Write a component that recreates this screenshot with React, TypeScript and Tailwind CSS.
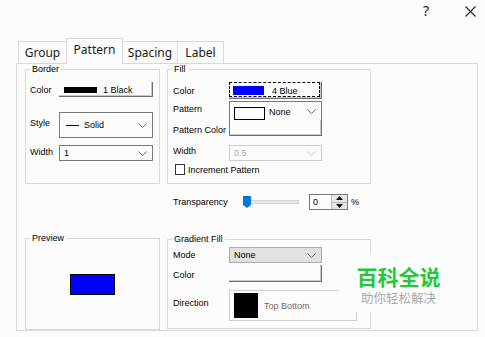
import React from 'react';

const Chevron = ({ color = '#6b6b6b' }: { color?: string }) => (
  <svg width="9" height="5" viewBox="0 0 9 5">
    <path d="M0.5 0.5 L4.5 4.5 L8.5 0.5" fill="none" stroke={color} strokeWidth="1" />
  </svg>
);

const GroupBox = ({
  label,
  className,
  children,
}: {
  label: string;
  className?: string;
  children?: React.ReactNode;
}) => (
  <div className={`relative border border-[#d9d9d9] ${className ?? ''}`}>
    <span className="absolute -top-[6px] left-[4px] px-[2px] bg-[#fcfcfc] text-[9px] leading-[10px] text-black">
      {label}
    </span>
    {children}
  </div>
);

// flat button with dark bottom/right edge
const FlatButton = ({ className, children }: { className?: string; children?: React.ReactNode }) => (
  <div
    className={`flex items-center shadow-[inset_-1px_-1px_0_#6e6e6e,inset_-2px_-2px_0_#c9c9c9] ${className ?? ''}`}
  >
    {children}
  </div>
);

const Select = ({
  className,
  children,
  disabled,
}: {
  className?: string;
  children?: React.ReactNode;
  disabled?: boolean;
}) => (
  <div
    className={`flex items-center justify-between border pr-[5px] ${
      disabled ? 'border-[#cccccc] text-[#a6a6a6]' : 'border-[#7a7a7a]'
    } ${className ?? ''}`}
  >
    <div className="flex items-center">{children}</div>
    <Chevron color={disabled ? '#bdbdbd' : '#6b6b6b'} />
  </div>
);

export default function App() {
  return (
    <div className="relative w-[485px] h-[337px] overflow-hidden bg-[#fcfcfc] font-['Liberation_Sans',Arial,sans-serif] text-black">
      {/* title bar */}
      <div className="flex h-[39px] items-start justify-end pr-[9px] pt-[2px]">
        <span className="font-['Noto_Sans',sans-serif] text-[14px] leading-[18px] text-[#222]">?</span>
        <svg className="ml-[36px] mt-[4px]" width="11" height="11" viewBox="0 0 11 11">
          <path d="M0.5 0.5 L10.5 10.5 M10.5 0.5 L0.5 10.5" stroke="#222" strokeWidth="1.1" />
        </svg>
      </div>

      {/* tabs */}
      <div className="flex h-[24px] items-end pl-[18px] font-['Noto_Sans',sans-serif] text-[12px] text-[#1a1a1a]">
        <div className="flex h-[22px] w-[49px] items-center justify-center border border-b-0 border-[#d9d9d9] pt-[1px]">
          Group
        </div>
        <div className="relative z-10 -ml-px -mb-px flex h-[26px] w-[57px] items-start justify-center border border-b-0 border-[#d9d9d9] bg-[#fcfcfc] pt-[2px]">
          Pattern
        </div>
        <div className="-ml-px flex h-[22px] w-[56px] items-center justify-center border border-b-0 border-[#d9d9d9] pt-[1px]">
          Spacing
        </div>
        <div className="-ml-px flex h-[22px] w-[47px] items-center justify-center border border-b-0 border-[#d9d9d9] pt-[1px]">
          Label
        </div>
      </div>

      {/* tab panel */}
      <div className="ml-[16px] flex h-[268px] w-[462px] gap-[7px] border border-[#d9d9d9] pl-[8px] pt-[5px] text-[9px] leading-[10px]">
        {/* left column */}
        <div className="flex w-[135px] flex-col">
          <GroupBox label="Border" className="h-[115px]">
            <div className="flex flex-col pl-[4px] pt-[12px]">
              <div className="flex h-[15px] items-center">
                <span className="w-[29px]">Color</span>
                <FlatButton className="h-[15px] w-[94px] pl-[5px]">
                  <div className="h-[6px] w-[33px] bg-black" />
                  <span className="ml-[6px]">1 Black</span>
                </FlatButton>
              </div>
              <div className="mt-[15px] flex h-[26px] items-center">
                <span className="w-[29px] -mt-[4px]">Style</span>
                <Select className="h-[26px] w-[94px] pl-[6px]">
                  <div className="h-px w-[13px] bg-black" />
                  <span className="ml-[5px]">Solid</span>
                </Select>
              </div>
              <div className="mt-[7px] flex h-[16px] items-center">
                <span className="w-[29px] -mt-[2px]">Width</span>
                <Select className="h-[16px] w-[94px] pl-[4px]">
                  <span>1</span>
                </Select>
              </div>
            </div>
          </GroupBox>

          <GroupBox label="Preview" className="mt-[54px] flex h-[92px] items-center justify-center">
            <div className="h-[21px] w-[45px] border border-black bg-[#0000ff]" />
          </GroupBox>
        </div>

        {/* right column */}
        <div className="flex w-[204px] flex-col">
          <GroupBox label="Fill" className="h-[115px]">
            <div className="flex flex-col pl-[5px] pt-[12px]">
              <div className="flex h-[17px] items-center">
                <span className="w-[56px]">Color</span>
                <FlatButton className="relative h-[17px] w-[93px] pl-[4px]">
                  <div className="absolute left-0 top-0 h-[15px] w-[91px] border border-dashed border-black" />
                  <div className="h-[9px] w-[31px] bg-[#0000ff]" />
                  <span className="ml-[8px]">4 Blue</span>
                </FlatButton>
              </div>
              <div className="mt-[2px] flex h-[19px] items-start">
                <span className="w-[56px] pt-[3px]">Pattern</span>
                <div className="flex h-[19px] w-[93px] items-center justify-between border border-b-0 border-[#7a7a7a] pl-[4px] pr-[5px]">
                  <div className="flex items-center">
                    <div className="mt-[4px] h-[13px] w-[31px] border border-black bg-white" />
                    <span className="ml-[4px] mt-[2px]">None</span>
                  </div>
                  <Chevron />
                </div>
              </div>
              <div className="flex h-[16px] items-center">
                <span className="w-[56px] mt-[4px]">Pattern Color</span>
                <FlatButton className="h-[16px] w-[93px] border-l border-[#7a7a7a]" />
              </div>
              <div className="mt-[9px] flex h-[16px] items-center">
                <span className="w-[56px] -mt-[4px]">Width</span>
                <Select disabled className="h-[16px] w-[93px] pl-[4px]">
                  <span>0.5</span>
                </Select>
              </div>
              <div className="mt-[3px] flex h-[11px] items-center pl-[2px]">
                <div className="h-[11px] w-[10px] border border-[#333]" />
                <span className="ml-[3px]">Increment Pattern</span>
              </div>
            </div>
          </GroupBox>

          <div className="mt-[10px] flex h-[16px] items-center pl-[6px]">
            <span className="w-[70px]">Transparency</span>
            <div className="relative flex h-[16px] w-[56px] items-center">
              <div className="h-[4px] w-full border border-[#d6d6d6] bg-[#e7e7e7]" />
              <svg className="absolute left-0 top-[2px]" width="8" height="12" viewBox="0 0 8 12">
                <path d="M0 0 H8 V9 L4 12 L0 9 Z" fill="#0078d7" />
              </svg>
            </div>
            <div className="ml-[10px] flex h-[16px] w-[39px] border border-[#7a7a7a]">
              <span className="flex-1 pl-[3px] pt-[2px]">0</span>
              <div className="flex w-[16px] flex-col border-l border-[#b9b9b9] bg-[#e6e6e6]">
                <div className="flex flex-1 items-center justify-center border-b border-[#b9b9b9]">
                  <svg width="7" height="4" viewBox="0 0 7 4">
                    <path d="M0 4 L3.5 0 L7 4 Z" fill="#111" />
                  </svg>
                </div>
                <div className="flex flex-1 items-center justify-center">
                  <svg width="7" height="4" viewBox="0 0 7 4">
                    <path d="M0 0 L3.5 4 L7 0 Z" fill="#111" />
                  </svg>
                </div>
              </div>
            </div>
            <span className="ml-[3px]">%</span>
          </div>

          <GroupBox label="Gradient Fill" className="mt-[29px] h-[90px]">
            <div className="flex flex-col pl-[5px] pt-[7px]">
              <div className="flex h-[16px] items-center">
                <span className="w-[56px]">Mode</span>
                <Select className="h-[16px] w-[93px] border-[#adadad] bg-[#e1e1e1] pl-[4px]">
                  <span>None</span>
                </Select>
              </div>
              <div className="mt-[2px] flex h-[17px] items-center">
                <span className="w-[56px] mt-[2px]">Color</span>
                <FlatButton className="h-[17px] w-[93px]" />
              </div>
              <div className="mt-[8px] flex h-[30px] items-start">
                <span className="w-[56px] pt-[8px]">Direction</span>
                <div className="flex h-[31px] w-[128px] items-center border border-[#cdcdcd] pl-[4px]">
                  <div className="h-[25px] w-[24px] bg-black" />
                  <span className="ml-[6px] text-[#6d6d6d]">Top Bottom</span>
                </div>
              </div>
            </div>
          </GroupBox>
        </div>
      </div>

      {/* watermark (sits on its own light backdrop over the dialog) */}
      <div className="absolute left-[339px] top-[253px] flex h-[59px] w-[118px] flex-col items-center bg-[#fcfcfc] pl-[1px] pt-[11px] font-['Noto_Sans_CJK_SC',sans-serif]">
        <span className="text-[21px] font-bold leading-[24px] text-[#1fc93a]">百科全说</span>
        <span className="mt-[3px] text-[12.5px] leading-[14px] text-[#a8a8a8]">助你轻松解决</span>
      </div>
    </div>
  );
}
